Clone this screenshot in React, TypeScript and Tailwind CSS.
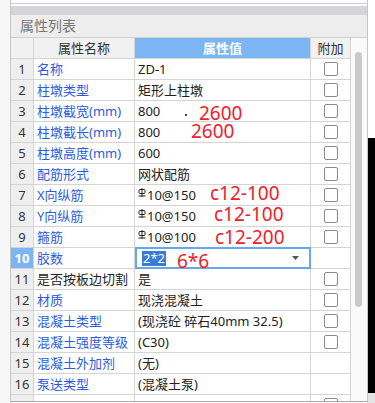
const rows = [
  { n: 1, name: "名称", value: "ZD-1", check: true },
  { n: 2, name: "柱墩类型", value: "矩形上柱墩", check: true },
  { n: 3, name: "柱墩截宽(mm)", value: "800", check: true },
  { n: 4, name: "柱墩截长(mm)", value: "800", check: true },
  { n: 5, name: "柱墩高度(mm)", value: "600", check: true },
  { n: 6, name: "配筋形式", value: "网状配筋", check: true },
  { n: 7, name: "X向纵筋", value: "10@150", bar: true, check: true },
  { n: 8, name: "Y向纵筋", value: "10@150", bar: true, check: true },
  { n: 9, name: "箍筋", value: "10@100", bar: true, check: true },
  { n: 10, name: "胶数", value: "2*2", editing: true, check: false },
  { n: 11, name: "是否按板边切割", value: "是", plain: true, check: true },
  { n: 12, name: "材质", value: "现浇混凝土", check: true },
  { n: 13, name: "混凝土类型", value: "(现浇砼 碎石40mm 32.5)", check: true },
  { n: 14, name: "混凝土强度等级", value: "(C30)", check: true },
  { n: 15, name: "混凝土外加剂", value: "(无)", check: false },
  { n: 16, name: "泵送类型", value: "(混凝土泵)", check: false },
  // only the top edge of this row shows, so its texts stay empty
  { n: 0, name: "", value: "", check: true },
];

// HRB400 rebar mark, the software draws it with its own font
function RebarMark() {
  return (
    <svg width="8" height="10" viewBox="0 0 8 10" className="mr-[1px] -mt-[5px] shrink-0">
      <rect x="1" y="1.5" width="6" height="4" rx="1" fill="none" stroke="#222" strokeWidth="1" />
      <line x1="4" y1="0" x2="4" y2="9" stroke="#222" strokeWidth="1" />
      <line x1="0.5" y1="8" x2="7.5" y2="8" stroke="#222" strokeWidth="1" />
    </svg>
  );
}

function Checkbox() {
  return <div className="h-[14px] w-[14px] rounded-[2px] border border-[#8a8a8a] bg-white" />;
}

const notes = [
  { text: "2600", left: "left-[199px]", top: "top-[104px]" },
  { text: "2600", left: "left-[191px]", top: "top-[122px]" },
  { text: "c12-100", left: "left-[210px]", top: "top-[184px]" },
  { text: "c12-100", left: "left-[214px]", top: "top-[205px]" },
  { text: "c12-200", left: "left-[215px]", top: "top-[228px]" },
  { text: "6*6", left: "left-[177px]", top: "top-[252px]" },
];

export default function App() {
  return (
    <div
      className="relative flex h-[403px] w-[375px] overflow-hidden bg-[#f7f7f7] text-[13px] text-[#222]"
      style={{ fontFamily: '"Noto Sans", "Noto Sans CJK SC", sans-serif' }}
    >
      <div className="w-[10px] shrink-0" />

      <div className="flex w-[358px] shrink-0 flex-col border-x border-[#c6c6c6] bg-white">
        <div className="h-[4px] border-b border-[#cfcfcf]" />
        <div className="h-[2px]" />
        <div className="h-[9px] bg-[#d5d6da]" />
        <div className="flex h-[23px] items-center border-b border-[#d0d0d0] bg-[#ededed] pl-[9px] text-[14px] leading-none text-[#777]">
          属性列表
        </div>

        <div className="flex min-h-0 flex-1">
          <div className="w-[340px] shrink-0 overflow-hidden">
            {/* header */}
            <div className="flex h-[21px] border-b border-[#d4d4d4] leading-none">
              <div className="w-[23px] shrink-0 border-r border-[#d4d4d4] bg-[#f1f1f1]" />
              <div className="flex w-[101px] shrink-0 items-center justify-center border-r border-[#d4d4d4] bg-[#f1f1f1] text-[#333]">
                属性名称
              </div>
              <div className="flex w-[176px] shrink-0 items-center justify-center border-r border-[#d4d4d4] bg-[#7cb5f3] font-semibold text-white">
                属性值
              </div>
              <div className="flex w-[40px] shrink-0 items-center justify-center border-r border-[#d4d4d4] bg-[#f1f1f1] text-[#333]">
                附加
              </div>
            </div>

            {rows.map((r, i) => (
              <div key={i} className="flex h-[21px] border-b border-[#d4d4d4] leading-none">
                <div
                  className={
                    r.editing
                      ? "flex w-[23px] shrink-0 items-center justify-center border-r border-[#d4d4d4] bg-[#7cb5f3] font-bold text-white"
                      : "flex w-[23px] shrink-0 items-center justify-center border-r border-[#d4d4d4] bg-[#efefef] text-[#333]"
                  }
                >
                  {r.n > 0 ? r.n : ""}
                </div>
                <div
                  className={
                    r.plain
                      ? "flex w-[101px] shrink-0 items-center whitespace-nowrap border-r border-[#d4d4d4] pl-[3px] pt-[1px] text-[#222]"
                      : "flex w-[101px] shrink-0 items-center whitespace-nowrap border-r border-[#d4d4d4] pl-[3px] pt-[1px] text-[#2b5ce0]"
                  }
                >
                  {r.name}
                </div>
                {r.editing ? (
                  <div className="-mt-px flex h-[22px] w-[176px] shrink-0 items-center border-2 border-[#6aa7ea] pl-[5px] pr-[10px]">
                    <span className="bg-[#3a7bd8] px-[1px] py-[1px] text-white">{r.value}</span>
                    <svg width="7" height="4" viewBox="0 0 7 4" className="ml-auto">
                      <path d="M0 0h7L3.5 4z" fill="#555" />
                    </svg>
                  </div>
                ) : (
                  <div className="flex w-[176px] shrink-0 items-center whitespace-nowrap border-r border-[#d4d4d4] pl-[3px] pt-[1px]">
                    {r.bar && <RebarMark />}
                    {r.value}
                  </div>
                )}
                <div className="flex w-[40px] shrink-0 items-center justify-center border-r border-[#d4d4d4]">
                  {r.check && <Checkbox />}
                </div>
              </div>
            ))}
          </div>

          <div className="relative w-[16px] shrink-0 bg-[#fafafa]">
            <div className="absolute left-[4px] top-[14px] h-[255px] w-[7px] rounded-full bg-[#c9c9c9]" />
          </div>
        </div>

        <div className="h-[2px] border-t border-[#a8a8a8] bg-white" />
      </div>

      <div className="flex w-[7px] shrink-0 flex-col">
        <div className="h-[138px] bg-white" />
        <div className="h-[255px] bg-black" />
        <div className="flex-1 bg-[#e4e4e4]" />
      </div>

      {/* hand-written markup on top of the screenshot */}
      <div className="absolute left-[185px] top-[114px] h-[2px] w-[2px] bg-[#444]" />
      {notes.map((t, i) => (
        <div key={i} className={`absolute ${t.left} ${t.top} text-[19px] leading-none text-[#f0202a]`}>
          {t.text}
        </div>
      ))}
    </div>
  );
}
